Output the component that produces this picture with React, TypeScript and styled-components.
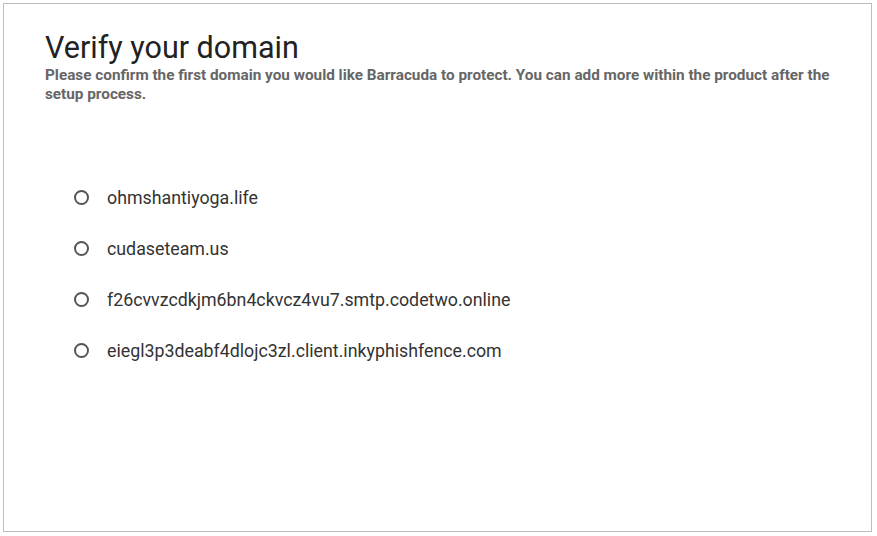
import styled, { createGlobalStyle } from 'styled-components';

const domains = [
    'ohmshantiyoga.life',
    'cudaseteam.us',
    'f26cvvzcdkjm6bn4ckvcz4vu7.smtp.codetwo.online',
    'eiegl3p3deabf4dlojc3zl.client.inkyphishfence.com',
];

const GlobalStyle = createGlobalStyle`
    body {
        margin: 0;
        background: #ffffff;
        font-family: Roboto, "Liberation Sans", sans-serif;
    }
`;

export default function App() {
    return (
        <Page>
            <GlobalStyle />
            <Card>
                <Title>Verify your domain</Title>
                <Subtitle>
                    Please confirm the first domain you would like Barracuda to protect. You can add more within the product after the setup process.
                </Subtitle>
                <DomainList>
                    {domains.map((d) => (
                        <DomainRow key={d}>
                            <Radio type='radio' name='domain' value={d} />
                            <DomainName>{d}</DomainName>
                        </DomainRow>
                    ))}
                </DomainList>
            </Card>
        </Page>
    );
}

const Page = styled.div`
    width: 877px;
    height: 536px;
    padding: 3px 5px 4px 3px;
    box-sizing: border-box;
`;

const Card = styled.div`
    height: 100%;
    box-sizing: border-box;
    border: 1px solid #bdbdbd;
    padding: 26px 36px 0 41px;
`;

const Title = styled.h1`
    margin: 0;
    font-size: 30.5px;
    font-weight: 400;
    line-height: 36px;
    color: #222;
`;

const Subtitle = styled.p`
    margin: 0;
    font-size: 15.3px;
    font-weight: 700;
    line-height: 19px;
    color: #666;
`;

const DomainList = styled.div`
    display: flex;
    flex-direction: column;
    gap: 27px;
    margin-top: 81px;
    padding-left: 29px;
`;

const DomainRow = styled.label`
    display: flex;
    align-items: center;
    gap: 18px;
    height: 24px;
    cursor: pointer;
`;

const Radio = styled.input`
    appearance: none;
    margin: 0;
    width: 15px;
    height: 15px;
    border: 2px solid #555;
    border-radius: 50%;
    box-sizing: border-box;
`;

const DomainName = styled.span`
    font-size: 17.8px;
    color: #333;
`;
